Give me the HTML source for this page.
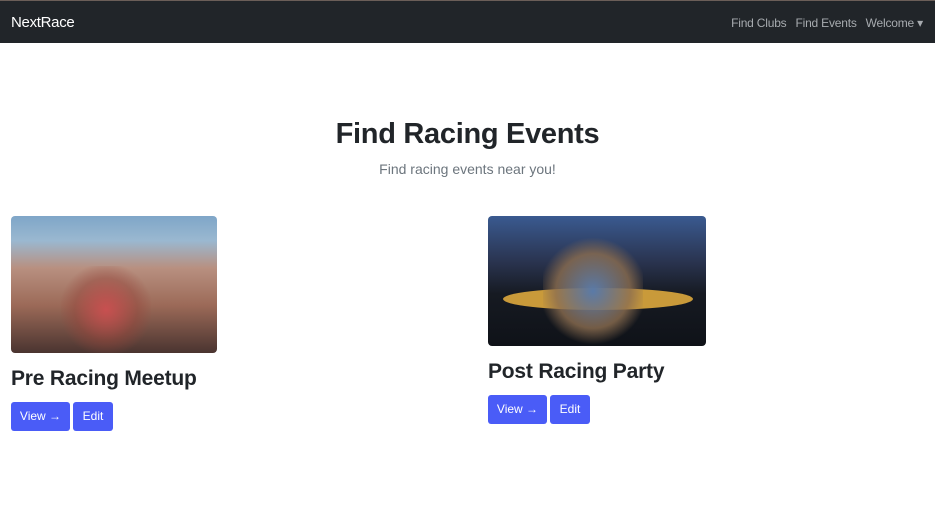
<!DOCTYPE html>
<html><head><style>
body{margin:0;width:935px;height:507px;background:#fff;font-family:"Liberation Sans",sans-serif;color:#212529;position:relative;overflow:hidden}
.nav{position:absolute;left:0;top:0;width:935px;height:43px;background:#212529;border-top:1px solid #6b5e58;box-sizing:border-box}
.brand{position:absolute;left:11px;top:13px;color:#fff;font-size:15px;letter-spacing:-0.3px}
.links{position:absolute;right:12px;top:15px;color:#a7abaf;font-size:12px;letter-spacing:-0.2px}
.links span{margin-left:9px}
h1{position:absolute;top:118px;left:0;width:935px;text-align:center;margin:0;font-size:29px;font-weight:bold;letter-spacing:-0.3px}
.sub{position:absolute;top:161px;width:935px;text-align:center;color:#6c757d;font-size:14px}
.img{position:absolute;border-radius:4px;overflow:hidden}
h2{position:absolute;margin:0;font-size:21px;font-weight:bold;letter-spacing:-0.2px}
.btn{position:absolute;background:#4a5cf7;color:#fff;font-size:12px;height:29px;line-height:29px;border-radius:3px;text-align:center}
</style></head><body>
<div class="nav"><div class="brand">NextRace</div>
<div class="links">Find Clubs<span>Find Events</span><span>Welcome ▾</span></div></div>
<h1>Find Racing Events</h1>
<div class="sub">Find racing events near you!</div>
<div class="img" style="left:11px;top:216px;width:206px;height:137px;background:linear-gradient(180deg,#7fa6c8 0%,#9ab8d0 18%,#b89080 38%,#9c6a58 65%,#4a3430 100%)">
<div style="position:absolute;left:50px;top:50px;width:90px;height:87px;background:radial-gradient(circle,#c85050 0%,rgba(150,70,60,0.5) 50%,transparent 75%)"></div></div>
<div class="img" style="left:488px;top:216px;width:218px;height:130px;background:linear-gradient(180deg,#3a5a90 0%,#2a3450 35%,#161a22 60%,#0f1218 100%)">
<div style="position:absolute;left:15px;top:72px;width:190px;height:22px;border-radius:50%;background:#c99a3a"></div>
<div style="position:absolute;left:55px;top:20px;width:100px;height:110px;background:radial-gradient(circle,#5a7aa8,rgba(140,110,80,0.8) 50%,transparent 72%)"></div></div>
<h2 style="left:11px;top:367px">Pre Racing Meetup</h2>
<div class="btn" style="left:11px;top:402px;width:59px">View →</div>
<div class="btn" style="left:73px;top:402px;width:40px">Edit</div>
<h2 style="left:488px;top:360px">Post Racing Party</h2>
<div class="btn" style="left:488px;top:395px;width:59px">View →</div>
<div class="btn" style="left:550px;top:395px;width:40px">Edit</div>
</body></html>
